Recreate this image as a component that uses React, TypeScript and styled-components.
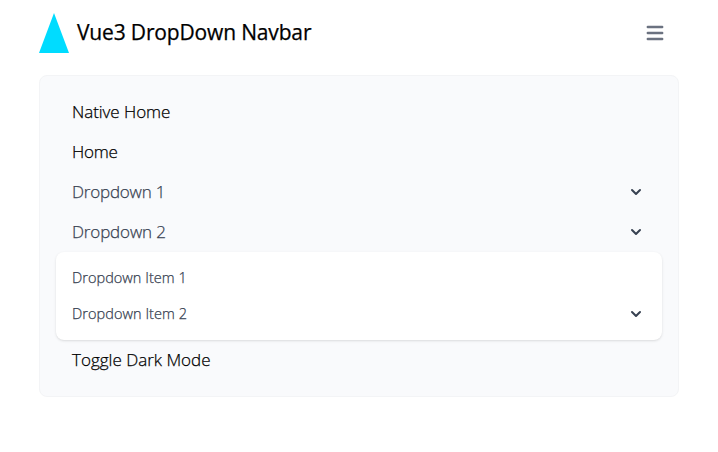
import React from 'react';
import styled, { createGlobalStyle } from 'styled-components';

const GlobalStyle = createGlobalStyle`
  *, *::before, *::after { box-sizing: border-box; }
  body { margin: 0; background: #fff; color: #000; font-family: "Open Sans", "Noto Sans", sans-serif; }
`;

const Nav = styled.nav`
  width: 640px;
  margin: 0 39px;
  padding-top: 13px;
`;

const Header = styled.header`
  display: flex;
  align-items: center;
  justify-content: space-between;
  height: 40px;
`;

const Brand = styled.a`
  display: flex;
  align-items: center;
  gap: 8px;
`;

const Logo = styled.svg`
  display: block;
  width: 30px;
  height: 40px;
`;

const Title = styled.span`
  padding-bottom: 2px;
  font-size: 21px;
  line-height: 28px;
  font-weight: 400;
  letter-spacing: -0.16px;
  -webkit-text-stroke: 0.25px currentColor;
  white-space: nowrap;
`;

const MenuButton = styled.button`
  display: flex;
  padding: 8px;
  margin-right: 4px;
  border: 0;
  background: none;
  color: #6b7280;
`;

const Menu = styled.ul`
  list-style: none;
  margin: 22px 0 0;
  padding: 16px;
  border: 1px solid #f3f4f6;
  border-radius: 8px;
  background: #f9fafc;
`;

const Item = styled.li<{ $muted?: boolean }>`
  display: flex;
  align-items: center;
  justify-content: space-between;
  height: 40px;
  padding: 0 16px;
  font-size: 17px;
  font-weight: 300;
  color: ${(p) => (p.$muted ? '#374151' : '#000')};
`;

const SubMenu = styled.ul`
  list-style: none;
  margin: 0;
  padding: 8px 0;
  border-radius: 8px;
  background: #fff;
  box-shadow: 0 1px 3px rgba(0, 0, 0, 0.1), 0 1px 2px -1px rgba(0, 0, 0, 0.1);
`;

const SubItem = styled(Item)`
  height: 36px;
  font-size: 14.5px;
`;

const Label = styled.span<{ $spacing?: number }>`
  padding-bottom: 2px;
  white-space: nowrap;
  letter-spacing: ${(p) => p.$spacing ?? 0}px;
  -webkit-text-stroke: 0.25px currentColor;
`;

const Chevron = () => (
  <svg width="20" height="20" viewBox="0 0 20 20" fill="currentColor">
    <path fillRule="evenodd" clipRule="evenodd" d="M5.293 7.293a1 1 0 011.414 0L10 10.586l3.293-3.293a1 1 0 111.414 1.414l-4 4a1 1 0 01-1.414 0l-4-4a1 1 0 010-1.414z" />
  </svg>
);

export default function App() {
  return (
    <>
      <GlobalStyle />
      <Nav>
        <Header>
          <Brand>
            <Logo viewBox="0 0 30 40"><path d="M15 0L30 40H0z" fill="#00dcff" /></Logo>
            <Title>Vue3 DropDown Navbar</Title>
          </Brand>
          <MenuButton aria-label="Open menu">
            <svg width="24" height="24" viewBox="0 0 20 20" fill="currentColor">
              <path fillRule="evenodd" clipRule="evenodd" d="M3 5a1 1 0 011-1h12a1 1 0 110 2H4a1 1 0 01-1-1zM3 10a1 1 0 011-1h12a1 1 0 110 2H4a1 1 0 01-1-1zM3 15a1 1 0 011-1h12a1 1 0 110 2H4a1 1 0 01-1-1z" />
            </svg>
          </MenuButton>
        </Header>
        <Menu>
          <Item><Label $spacing={-0.05}>Native Home</Label></Item>
          <Item><Label $spacing={-0.2}>Home</Label></Item>
          <Item $muted><Label $spacing={-0.2}>Dropdown 1</Label><Chevron /></Item>
          <Item $muted><Label $spacing={-0.15}>Dropdown 2</Label><Chevron /></Item>
          <SubMenu>
            <SubItem $muted><Label $spacing={0.03}>Dropdown Item 1</Label></SubItem>
            <SubItem $muted><Label $spacing={0.05}>Dropdown Item 2</Label><Chevron /></SubItem>
          </SubMenu>
          <Item><Label>Toggle Dark Mode</Label></Item>
        </Menu>
      </Nav>
    </>
  );
}
